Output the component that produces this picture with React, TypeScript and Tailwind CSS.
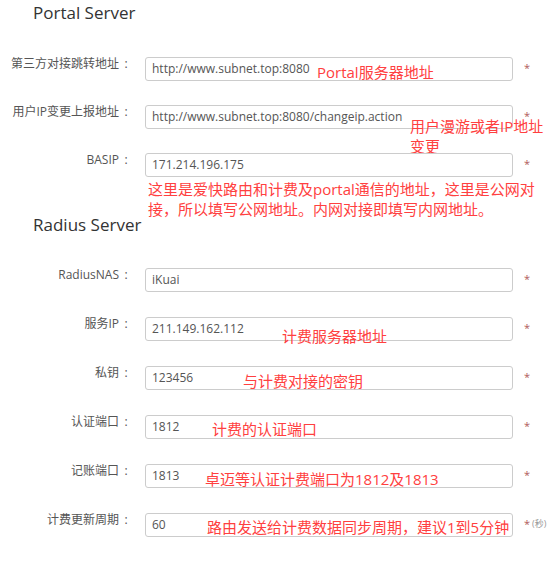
import React from 'react';

/* ================= TYPES ================= */

interface Note {
  text: React.ReactNode;
  left: number; // offset from the row's left edge, px
  top: number; // offset from the input's top, px
}

interface FieldRow {
  label: string;
  value: string;
  unit?: string;
  note?: Note;
}

/* ================= DATA ================= */

const portalRows: FieldRow[] = [
  {
    label: '第三方对接跳转地址',
    value: 'http://www.subnet.top:8080',
    note: { text: 'Portal服务器地址', left: 317, top: 5 },
  },
  {
    label: '用户IP变更上报地址',
    value: 'http://www.subnet.top:8080/changeip.action',
    note: {
      text: (
        <>
          用户漫游或者IP地址
          <br />
          变更
        </>
      ),
      left: 410,
      top: 11,
    },
  },
  { label: 'BASIP', value: '171.214.196.175' },
];

const radiusRows: FieldRow[] = [
  { label: 'RadiusNAS', value: 'iKuai' },
  {
    label: '服务IP',
    value: '211.149.162.112',
    note: { text: '计费服务器地址', left: 282, top: 9 },
  },
  {
    label: '私钥',
    value: '123456',
    note: { text: '与计费对接的密钥', left: 243, top: 5 },
  },
  {
    label: '认证端口',
    value: '1812',
    note: { text: '计费的认证端口', left: 212, top: 4 },
  },
  {
    label: '记账端口',
    value: '1813',
    note: { text: '卓迈等认证计费端口为1812及1813', left: 205, top: 5 },
  },
  {
    label: '计费更新周期',
    value: '60',
    unit: '(秒)',
    note: { text: '路由发送给计费数据同步周期，建议1到5分钟', left: 207, top: 4 },
  },
];

/* ================= COMPONENTS ================= */

const Row: React.FC<{ row: FieldRow }> = ({ row }) => (
  <div className="relative flex items-start">
    <label className="flex w-[133px] shrink-0 justify-end text-[12px] leading-[14px] text-[#555]">
      {row.label}
      {/* full-width colon, dots centred in its cell */}
      <span className="w-[14px] text-center">:</span>
    </label>
    <div className="ml-[12px] flex h-[24px] w-[368px] shrink-0 items-center rounded-[3px] border border-[#ccc] bg-white px-[6px] text-[12px] text-[#555]">
      {row.value}
    </div>
    <span className="ml-[11px] pt-[5px] text-[11px] leading-[12px] text-[#b05a5a]">*</span>
    {row.unit && (
      <span className="ml-[2px] pt-[4px] text-[9px] leading-[14px] text-[#999]">{row.unit}</span>
    )}

    {/* red hand-written notes laid over the form */}
    {row.note && (
      <div
        className="absolute whitespace-nowrap text-[15px] leading-[20px] text-[#ff4040]"
        style={{ left: row.note.left, top: row.note.top }}
      >
        {row.note.text}
      </div>
    )}
  </div>
);

const App: React.FC = () => {
  return (
    <div
      className="h-[580px] w-[554px] overflow-hidden bg-white"
      style={{ fontFamily: '"Open Sans", "Noto Sans CJK SC", sans-serif' }}
    >
      <h2 className="pl-[33px] pt-[1px] text-[17px] leading-[24px] text-[#333]">Portal Server</h2>

      <div className="mt-[32px] flex flex-col gap-[24px]">
        {portalRows.map((row) => (
          <Row key={row.label} row={row} />
        ))}
      </div>

      <p className="ml-[148px] mt-[2px] text-[15px] leading-[20px] text-[#ff4040]">
        这里是爱快路由和计费及portal通信的地址，这里是公网对
        <br />
        接，所以填写公网地址。内网对接即填写内网地址。
      </p>

      <h2 className="mt-[-6px] pl-[33px] text-[17px] leading-[24px] text-[#333]">Radius Server</h2>

      <div className="mt-[31px] flex flex-col gap-[25px]">
        {radiusRows.map((row) => (
          <Row key={row.label} row={row} />
        ))}
      </div>
    </div>
  );
};

export default App;
